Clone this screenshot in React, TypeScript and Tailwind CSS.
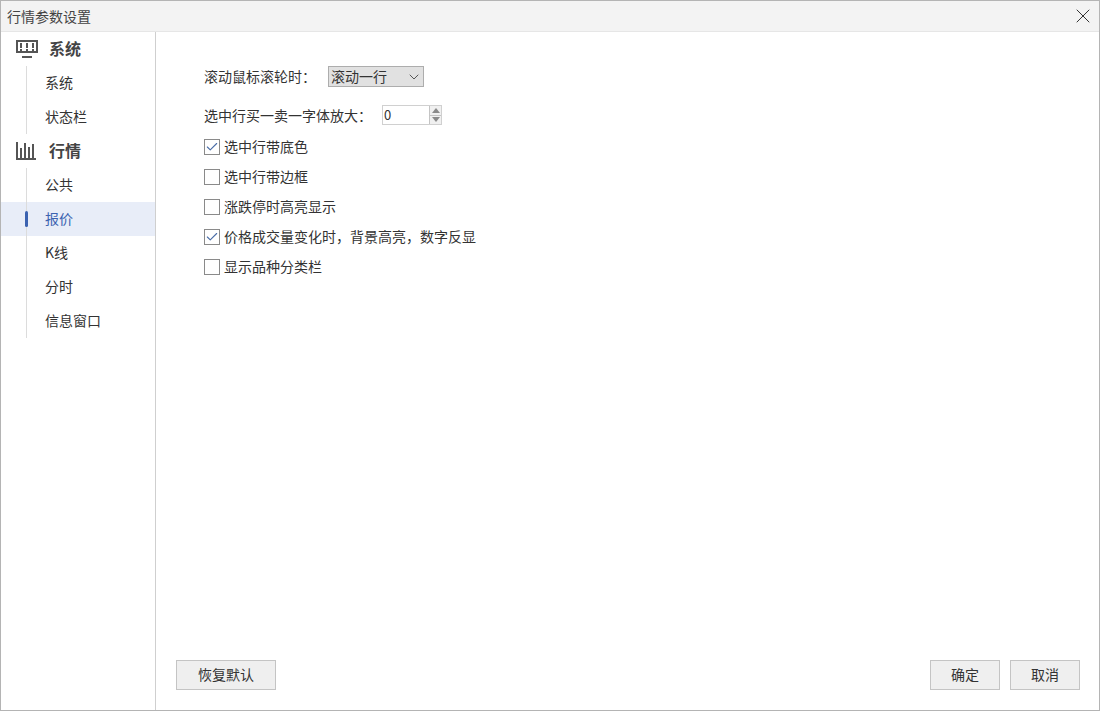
import { X, ChevronDown, Check } from "lucide-react"

const FONT = "font-['Noto_Sans_CJK_SC','Noto_Sans',sans-serif]"

function MonitorIcon() {
  return (
    <svg width="22" height="18" viewBox="0 0 22 18" fill="none" stroke="#555" className="block">
      <rect x="1" y="1" width="20" height="11" strokeWidth="2" />
      <path d="M5 3v5M11 3v5M17 3v5" strokeWidth="2" />
      <path d="M5 9v2M11 9v2M17 9v2" strokeWidth="2" />
      <path d="M6 17h10" strokeWidth="2" />
    </svg>
  )
}

function BarsIcon() {
  return (
    <svg width="20" height="18" viewBox="0 0 20 18" fill="none" stroke="#555" className="block">
      <path d="M1 0v17h19" strokeWidth="2" />
      <path d="M5 6v10M9 1v15M13 5v11M17 2v14" strokeWidth="2" />
    </svg>
  )
}

function GroupHead({ icon, label }: { icon: React.ReactNode; label: string }) {
  return (
    <div className="flex h-[34px] items-center">
      <div className="ml-[15px] flex w-[33px] shrink-0 items-center">{icon}</div>
      <span className="pb-[2px] text-[16px] font-bold text-[#444]">{label}</span>
    </div>
  )
}

function NavItem({ label, active }: { label: string; active?: boolean }) {
  return (
    <div className={active ? "relative flex h-[34px] bg-[#e8edf8]" : "relative flex h-[34px]"}>
      <div className="ml-[25px] w-px bg-[#dcdcdc]" />
      {active && <div className="absolute left-[24px] top-[9px] h-4 w-[3px] rounded-full bg-[#3b62b0]" />}
      <span className={active ? "ml-[18px] self-center pb-[2px] text-[#3b62b0]" : "ml-[18px] self-center pb-[2px] text-[#333]"}>{label}</span>
    </div>
  )
}

function CheckRow({ label, checked }: { label: string; checked?: boolean }) {
  return (
    <div className="flex h-[30px] items-center">
      <div className="flex h-4 w-4 items-center justify-center border border-[#8a8a8a] bg-white">
        {checked && <Check size={14} strokeWidth={1.900} className="shrink-0 text-[#4a6da7]" />}
      </div>
      <span className="ml-[4px] pb-[2px] text-[#333]">{label}</span>
    </div>
  )
}

function Btn({ label, wide }: { label: string; wide?: boolean }) {
  return (
    <button
      type="button"
      className={
        wide
          ? "h-[30px] w-[100px] border border-[#c4c4c4] bg-[#efefef] pb-[2px] text-[#333]"
          : "h-[30px] w-[70px] border border-[#c4c4c4] bg-[#efefef] pb-[2px] text-[#333]"
      }
    >
      {label}
    </button>
  )
}

export default function App() {
  return (
    <div className={`${FONT} flex h-[711px] w-[1100px] flex-col border border-[#b4b4b4] bg-white text-[14px] leading-5`}>
      <div className="flex h-[31px] shrink-0 items-center justify-between border-b border-[#e6e6e6] bg-[#f3f3f3] pl-[6px] pr-[4px]">
        <span className="text-[#444]">行情参数设置</span>
        <X size={24} strokeWidth={1} className="text-[#333]" />
      </div>

      <div className="flex min-h-0 flex-1">
        <aside className="w-[155px] shrink-0 border-r border-[#cfcfcf]">
          <GroupHead icon={<MonitorIcon />} label="系统" />
          <NavItem label="系统" />
          <NavItem label="状态栏" />
          <GroupHead icon={<BarsIcon />} label="行情" />
          <NavItem label="公共" />
          <NavItem label="报价" active />
          <NavItem label="K线" />
          <NavItem label="分时" />
          <NavItem label="信息窗口" />
        </aside>

        <main className="flex min-w-0 flex-1 flex-col justify-between pb-5 pl-5 pr-[19px]">
          <div className="pl-[28px] pt-[34px]">
            <div className="flex h-[21px] items-center text-[#333]">
              <span className="w-[124px] pb-[2px]">滚动鼠标滚轮时：</span>
              <div className="flex h-[21px] w-24 items-center justify-between border border-[#adadad] bg-[#e1e1e1] pl-[2px] pr-px">
                <span className="pb-[2px]">滚动一行</span>
                <ChevronDown size={16} strokeWidth={1.200} className="text-[#333]" />
              </div>
            </div>

            <div className="mt-[18px] flex h-[20px] items-center text-[#333]">
              <span className="w-[178px]">选中行买一卖一字体放大：</span>
              <div className="flex h-[20px] w-[60px] items-stretch border border-[#d0d0d0]">
                <span className="flex-1 pl-px text-[13px] leading-[18px]">0</span>
                <div className="flex w-[12px] flex-col border-l border-[#c4c4c4] bg-[#f0f0f0]">
                  <div className="flex flex-1 items-center justify-center border-b border-[#c4c4c4]">
                    <div className="h-0 w-0 border-x-[4px] border-b-[5px] border-x-transparent border-b-[#8a8a8a]" />
                  </div>
                  <div className="flex flex-1 items-center justify-center">
                    <div className="h-0 w-0 border-x-[4px] border-t-[5px] border-x-transparent border-t-[#8a8a8a]" />
                  </div>
                </div>
              </div>
            </div>

            <div className="mt-[7px]">
              <CheckRow label="选中行带底色" checked />
              <CheckRow label="选中行带边框" />
              <CheckRow label="涨跌停时高亮显示" />
              <CheckRow label="价格成交量变化时，背景高亮，数字反显" checked />
              <CheckRow label="显示品种分类栏" />
            </div>
          </div>

          <div className="flex items-center justify-between">
            <Btn label="恢复默认" wide />
            <div className="flex gap-[10px]">
              <Btn label="确定" />
              <Btn label="取消" />
            </div>
          </div>
        </main>
      </div>
    </div>
  )
}
